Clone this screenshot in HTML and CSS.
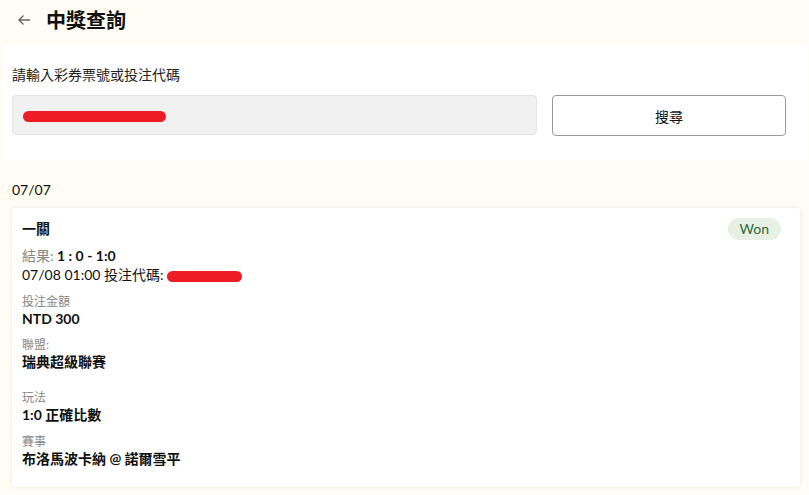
FILE: index.html
```html
<!DOCTYPE html>
<html lang="zh-Hant">
<head>
    <meta charset="UTF-8">
    <meta name="viewport" content="width=device-width, initial-scale=1.0">
    <title>中獎查詢</title>
    <link rel="stylesheet" href="styles.css">
</head>
<body>
    <div class="header">
        <span class="back">
            <svg width="14" height="12" viewBox="0 0 14 12">
                <path d="M13 6H2M6.5 1.5L2 6l4.5 4.5" fill="none" stroke="#666" stroke-width="1.4"/>
            </svg>
        </span>
        <h1>中獎查詢</h1>
    </div>

    <div class="search">
        <div class="search-label">請輸入彩券票號或投注代碼</div>
        <div class="search-row">
            <div class="input">
                <span class="redact redact-input"></span>
            </div>
            <div class="button">搜尋</div>
        </div>
    </div>

    <div class="results">
        <div class="date">07/07</div>
        <div class="card">
            <div class="card-head">
                <div class="card-title">一關</div>
                <div class="badge">Won</div>
            </div>
            <div class="line"><span class="muted">結果:</span> <b>1 : 0 - 1:0</b></div>
            <div class="line">07/08 01:00 投注代碼: <span class="redact redact-code"></span></div>

            <div class="field">
                <div class="field-label">投注金額</div>
                <div class="field-value">NTD 300</div>
            </div>
            <div class="field">
                <div class="field-label">聯盟:</div>
                <div class="field-value">瑞典超級聯賽</div>
            </div>
            <div class="field spaced">
                <div class="field-label">玩法</div>
                <div class="field-value">1:0 正確比數</div>
            </div>
            <div class="field">
                <div class="field-label">賽事</div>
                <div class="field-value">布洛馬波卡納 @ 諾爾雪平</div>
            </div>
        </div>
    </div>
</body>
</html>
```

FILE: styles.css
```css
body {
    margin: 0;
    background-color: #fffcf3;
    font-family: Lato, "Noto Sans CJK TC", sans-serif;
    color: #111;
}
.header {
    display: flex;
    align-items: center;
    height: 44px;
    padding: 0 0 5px 17px;
    box-sizing: border-box;
}
.back {
    display: flex;
    width: 29px;
}
.header h1 {
    margin: 0;
    font-size: 20px;
    font-weight: 700;
    line-height: 28px;
}
.search {
    background-color: #fff;
    margin: 0 1px 0 2px;
    padding: 21px 10px 24px 10px;
}
.search-label {
    font-size: 14px;
    line-height: 20px;
    color: #222;
    margin-bottom: 10px;
}
.search-row {
    display: flex;
    gap: 15px;
}
.input {
    flex: 0 0 525px;
    height: 40px;
    box-sizing: border-box;
    background-color: #f1f1f1;
    border: 1px solid #e3e3e3;
    border-radius: 4px;
    display: flex;
    align-items: center;
    padding-left: 10px;
}
.redact {
    display: inline-block;
    background-color: #ee1c25;
    border-radius: 6px;
}
.redact-input {
    width: 143px;
    height: 11px;
    margin-top: 3px;
}
.redact-code {
    width: 75px;
    height: 11px;
    vertical-align: -2px;
}
.button {
    width: 234px;
    height: 41px;
    box-sizing: border-box;
    border: 1px solid #999;
    border-radius: 4px;
    display: flex;
    align-items: center;
    justify-content: center;
    font-size: 14px;
    color: #111;
}
.results {
    padding: 20px 9px 8px 12px;
}
.date {
    font-size: 14px;
    line-height: 20px;
    margin-bottom: 8px;
}
.card {
    background-color: #fff;
    border-radius: 3px;
    box-shadow: 0 0 4px rgba(0, 0, 0, 0.08);
    padding: 10px 19px 20px 10px;
}
.card-head {
    display: flex;
    justify-content: space-between;
    align-items: center;
}
.card-title {
    font-size: 14px;
    font-weight: 700;
    line-height: 20px;
}
.badge {
    background-color: #e8f0e6;
    color: #2e6a3a;
    font-size: 14px;
    line-height: 22px;
    padding: 0 12px;
    border-radius: 11px;
}
.line {
    font-size: 14px;
    line-height: 19px;
}
.card-head + .line {
    margin-top: 6px;
}
.line b {
    font-weight: 700;
}
.muted {
    color: #888;
}
.field {
    margin-top: 9px;
}
.field.spaced {
    margin-top: 19px;
}
.field:last-child {
    margin-top: 10px;
}
.field-label {
    font-size: 12px;
    line-height: 17px;
    color: #888;
}
.field-value {
    font-size: 14px;
    font-weight: 700;
    line-height: 17px;
}
```
